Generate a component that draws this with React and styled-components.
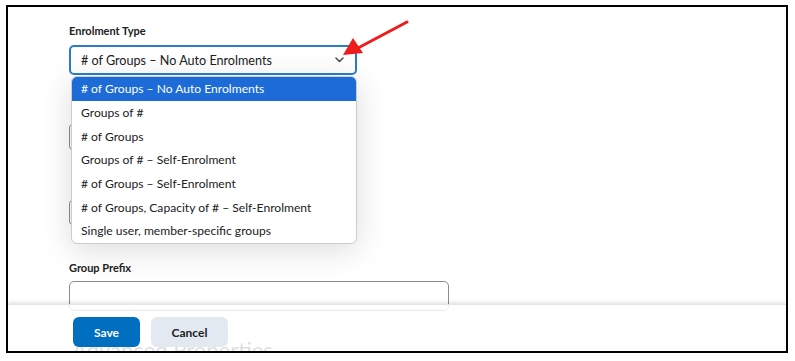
import React from "react";
import styled, { createGlobalStyle } from "styled-components";

const Global = createGlobalStyle`
  html, body { margin: 0; padding: 0; background: #fff; }
  body { font-family: Lato, "Noto Sans", sans-serif; color: #202122; }
`;

const Page = styled.div`
  width: 795px;
  height: 361px;
  padding: 5px 0 0 6px;
  box-sizing: border-box;
`;

const Frame = styled.div`
  position: relative;
  width: 782px;
  height: 348px;
  border: 2px solid #000;
  box-sizing: border-box;
  overflow: hidden;
  background: #fff;
`;

const Content = styled.div`
  display: flex;
  flex-direction: column;
  padding: 16px 0 0 61px;
`;

const Field = styled.div`
  display: flex;
  flex-direction: column;
  margin-bottom: ${(p) => p.$mb || 0}px;
`;

const Label = styled.div`
  font-size: 11px;
  font-weight: 700;
  line-height: 15px;
  color: #202122;
  margin-bottom: ${(p) => p.$mb ?? 7}px;
`;

const SelectWrap = styled.div`
  position: relative;
  width: 288px;
`;

const SelectBox = styled.div`
  height: 30px;
  box-sizing: border-box;
  border: 2px solid #2a7ccb;
  border-radius: 5px;
  display: flex;
  align-items: center;
  justify-content: space-between;
  padding: 0 11px 0 10px;
  font-size: 12.6px;
  color: #202122;
`;

const Dropdown = styled.ul`
  position: absolute;
  left: 2px;
  top: 31px;
  width: 286px;
  box-sizing: border-box;
  margin: 0;
  padding: 0;
  list-style: none;
  background: #fff;
  border: 1px solid #c9cdd1;
  border-radius: 6px;
  overflow: hidden;
  box-shadow: 0 6px 32px rgba(0, 0, 0, 0.14);
  z-index: 2;
`;

const Option = styled.li`
  height: 23.7px;
  display: flex;
  align-items: center;
  padding-left: 9px;
  font-size: 12.1px;
  color: ${(p) => (p.$active ? "#fff" : "#202122")};
  background: ${(p) => (p.$active ? "#1c6bd6" : "transparent")};
`;

const TextInput = styled.div`
  width: ${(p) => p.$w}px;
  height: ${(p) => p.$h || 30}px;
  box-sizing: border-box;
  border: 1px solid #868c8f;
  border-radius: 5px;
  background: #fff;
`;

const Heading = styled.div`
  font-size: 22px;
  font-weight: 400;
  color: #494c4e;
  line-height: 30px;
  margin: 2px 0 0 3px;
`;

const Footer = styled.div`
  position: absolute;
  left: 0;
  right: 0;
  top: 297px;
  height: 60px;
  background: rgba(255, 255, 255, 0.82);
  box-shadow: 0 -2px 3px rgba(0, 0, 0, 0.1);
  border-top: 1px solid #e3e5e7;
  display: flex;
  align-items: flex-start;
  gap: 11px;
  padding: 12px 0 0 65px;
  box-sizing: border-box;
  z-index: 3;
`;

const Button = styled.button`
  height: 30px;
  width: ${(p) => p.$w}px;
  border: none;
  border-radius: 6px;
  font-family: Lato, "Noto Sans", sans-serif;
  font-size: 12px;
  font-weight: 700;
  padding: 0;
  color: ${(p) => (p.$primary ? "#fff" : "#202122")};
  background: ${(p) => (p.$primary ? "#006fbf" : "#e3e9f1")};
`;

const Arrow = styled.svg`
  position: absolute;
  left: 0;
  top: 0;
  width: 782px;
  height: 100px;
  pointer-events: none;
  z-index: 4;
`;

const Chevron = () => (
  <svg width="9" height="6" viewBox="0 0 9 6">
    <path d="M1 1 L4.5 4.5 L8 1" fill="none" stroke="#494c4e" strokeWidth="1.5" strokeLinecap="round" strokeLinejoin="round" />
  </svg>
);

const options = [
  "# of Groups \u2013 No Auto Enrolments",
  "Groups of #",
  "# of Groups",
  "Groups of # \u2013 Self-Enrolment",
  "# of Groups \u2013 Self-Enrolment",
  "# of Groups, Capacity of # \u2013 Self-Enrolment",
  "Single user, member-specific groups",
];

export default function App() {
  return (
    <>
      <Global />
      <Page>
        <Frame>
          <Content>
            <Field $mb={48}>
              <Label>Enrolment Type</Label>
              <SelectWrap>
                <SelectBox>
                  <span># of Groups – No Auto Enrolments</span>
                  <Chevron />
                </SelectBox>
                <Dropdown>
                  {options.map((o, i) => (
                    <Option key={o} $active={i === 0}>{o}</Option>
                  ))}
                </Dropdown>
              </SelectWrap>
            </Field>
            <Field $mb={48}>
              <TextInput $w={100} $h={28} />
            </Field>
            <Field $mb={34}>
              <TextInput $w={100} $h={27} />
            </Field>
            <Field $mb={22}>
              <Label $mb={6}>Group Prefix</Label>
              <TextInput $w={380} />
            </Field>
            <Heading>Advanced Properties</Heading>
          </Content>
          <Arrow viewBox="0 0 782 100">
            <line x1="399" y1="15" x2="350" y2="41" stroke="#ee1c1c" strokeWidth="3" strokeLinecap="round" />
            <polygon points="335,48 345,31 355,46" fill="#ee1c1c" />
          </Arrow>
          <Footer>
            <Button $primary $w={67}>Save</Button>
            <Button $w={77}>Cancel</Button>
          </Footer>
        </Frame>
      </Page>
    </>
  );
}
